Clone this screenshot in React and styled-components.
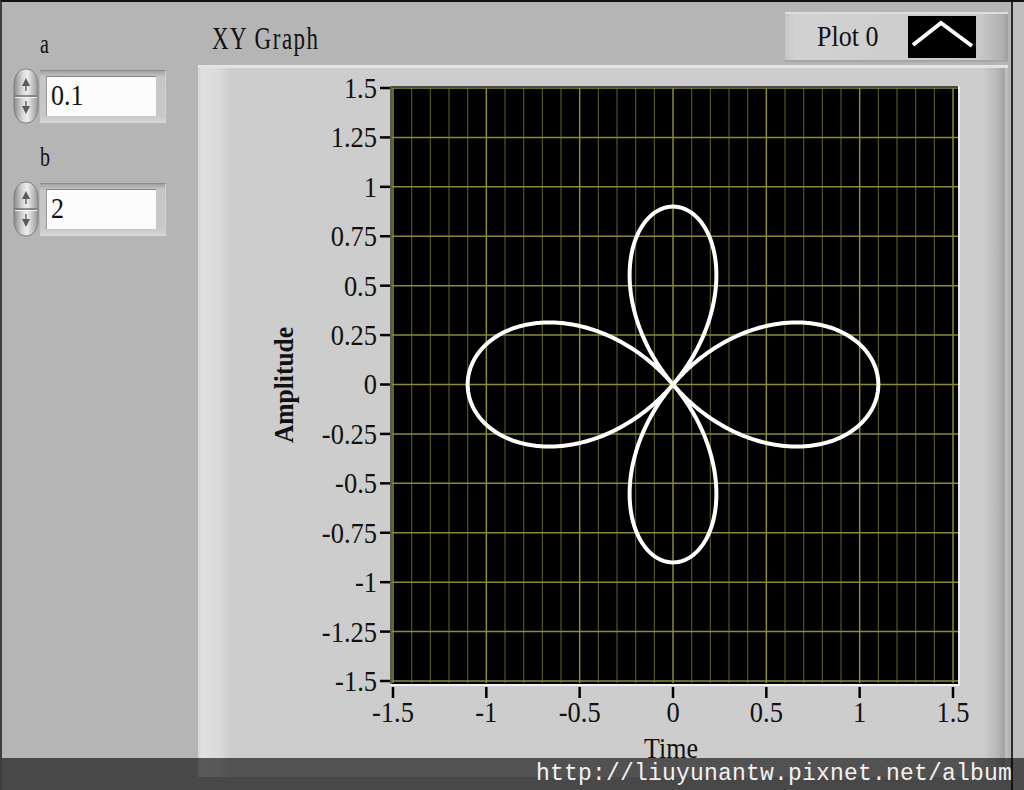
import React from "react"
import styled, { createGlobalStyle } from "styled-components"

const Global = createGlobalStyle`
  html, body {
    margin: 0;
    padding: 0;
    background: #b5b5b5;
    overflow: hidden;
  }
`

const SERIF = `"Liberation Serif", "Times New Roman", serif`

const Root = styled.div`
  position: relative;
  width: 1024px;
  height: 790px;
  box-sizing: border-box;
  overflow: hidden;
  display: flex;
  background: #b5b5b5;
  border-top: 2px solid #111;
  border-left: 2px solid #3e3e3e;
  font-family: ${SERIF};
  color: #111;
`

const LeftCol = styled.div`
  width: 196px;
  flex: none;
  box-sizing: border-box;
  padding: 34px 0 0 10px;
  display: flex;
  flex-direction: column;
`

const Group = styled.div`
  display: flex;
  flex-direction: column;
  margin-bottom: 25px;
`

const Label = styled.div`
  height: 20px;
  font-size: 20px;
  line-height: 20px;
  margin-left: 28px;
  margin-bottom: 12px;
  span {
    display: inline-block;
    transform: scaleY(1.4);
    transform-origin: left 17px;
  }
`

const Row = styled.div`
  display: flex;
  align-items: center;
`

const FieldFrame = styled.div`
  width: 126px;
  height: 53px;
  box-sizing: border-box;
  padding: 5px 9px 7px 6px;
  background: linear-gradient(#a3a3a3, #c6c6c6 6px, #c8c8c8 calc(100% - 7px), #d8d8d8);
  border-top: 1px solid #8c8c8c;
  border-right: 1px solid #d2d2d2;
`

const FieldInput = styled.div`
  height: 100%;
  box-sizing: border-box;
  background: #fcfcfc;
  border-top: 1px solid #858585;
  border-left: 1px solid #9a9a9a;
  display: flex;
  align-items: center;
  padding-left: 4px;
  font-size: 26px;
  span {
    display: inline-block;
    transform: scaleY(1.14);
  }
`

const GraphCol = styled.div`
  width: 813px;
  flex: none;
  display: flex;
  flex-direction: column;
`

const Header = styled.div`
  height: 63px;
  display: flex;
  align-items: flex-start;
  padding-left: 14px;
  box-sizing: border-box;
`

const Title = styled.div`
  margin-top: 28px;
  font-size: 23px;
  line-height: 23px;
  letter-spacing: 1.5px;
  span {
    display: inline-block;
    transform: scaleY(1.35);
    transform-origin: left 19px;
  }
`

const Legend = styled.div`
  margin: 10px 3px 0 auto;
  width: 223px;
  height: 50px;
  box-sizing: border-box;
  display: flex;
  align-items: center;
  padding-left: 32px;
  padding-right: 32px;
  background: linear-gradient(
    to right,
    #c6c6c6 0,
    #d2d2d2 12px,
    #cdcdcd 60%,
    #c9c9c9 calc(100% - 28px),
    #b0b0b0 calc(100% - 6px),
    #9e9e9e 100%
  );
  border-top: 2px solid #dedede;
  border-bottom: 2px solid #a6a6a6;
`

const LegendName = styled.div`
  font-size: 26px;
  span {
    display: inline-block;
    transform: scaleY(1.15);
  }
`

const Swatch = styled.svg`
  margin-left: auto;
  display: block;
  background: #000;
`

const Panel = styled.div`
  width: 810px;
  height: 712px;
  position: relative;
  background: linear-gradient(
    to right,
    #d4d4d4 0,
    #e0e0e0 4px,
    #dadada 22px,
    #cdcdcd 32px,
    #cdcdcd 785px,
    #b6b6b6 800px,
    #a2a2a2 806px,
    #c2c2c2 808px,
    #b8b8b8 810px
  );
  box-shadow: inset 0 3px 0 #e4e4e4;
`

const RightEdge = styled.div`
  flex: none;
  width: 11px;
  border-left: 2px solid #2c2c2c;
  background: #bdbdbd;
`

const Band = styled.div`
  position: absolute;
  left: 0;
  right: 0;
  top: 756px;
  height: 32px;
  background: rgba(0, 0, 0, 0.6);
  text-align: right;
  padding-right: 12px;
  box-sizing: border-box;
  font-family: "Liberation Mono", "Courier New", monospace;
  font-size: 23px;
  letter-spacing: 0.2px;
  line-height: 32px;
  color: #f2f2f2;
`

function Spinner() {
  return (
    <svg width="28" height="56" viewBox="0 0 28 56" style={{ display: "block", flex: "none" }}>
      <defs>
        <linearGradient id="spg" x1="0" x2="1" y1="0" y2="0">
          <stop offset="0" stopColor="#8a8a8a" />
          <stop offset="0.35" stopColor="#d6d6d6" />
          <stop offset="0.55" stopColor="#eeeeee" />
          <stop offset="1" stopColor="#979797" />
        </linearGradient>
      </defs>
      <rect x="2" y="1" width="24" height="54" rx="11" ry="15" fill="url(#spg)" stroke="#7c7c7c" />
      <line x1="3" x2="25" y1="28" y2="28" stroke="#6f6f6f" strokeWidth="1.5" />
      <line x1="3" x2="25" y1="29.5" y2="29.5" stroke="#f4f4f4" strokeWidth="1" />
      <path d="M10 18 L14 10 L18 18 Z" fill="#5a5a5a" />
      <rect x="13" y="18" width="2" height="5" fill="#8a8a8a" />
      <path d="M10 38 L14 46 L18 38 Z" fill="#5a5a5a" />
      <rect x="13" y="33" width="2" height="5" fill="#8a8a8a" />
    </svg>
  )
}

function Control({ name, value }) {
  return (
    <Group>
      <Label>
        <span>{name}</span>
      </Label>
      <Row>
        <Spinner />
        <FieldFrame>
          <FieldInput>
            <span>{value}</span>
          </FieldInput>
        </FieldFrame>
      </Row>
    </Group>
  )
}

// plot mapping, panel coordinates
const X = (v) => 475 + v * 186.67
const Y = (v) => 319.5 - v * 197.67
const yTicks = [1.5, 1.25, 1, 0.75, 0.5, 0.25, 0, -0.25, -0.5, -0.75, -1, -1.25, -1.5]
const xTicks = [-1.5, -1, -0.5, 0, 0.5, 1, 1.5]

function curvePath(a, b) {
  const n = 1200
  let d = ""
  for (let i = 0; i <= n; i++) {
    const t = (i / n) * Math.PI * 2
    const r = a + Math.cos(b * t)
    const px = X(r * Math.cos(t)).toFixed(2)
    const py = Y(r * Math.sin(t)).toFixed(2)
    d += (i === 0 ? "M" : "L") + px + " " + py
  }
  return d + "Z"
}

function Chart() {
  const vLines = []
  for (let i = 0; i <= 30; i++) {
    const v = -1.5 + i * 0.1
    const major = i % 5 === 0
    vLines.push(
      <line
        key={"v" + i}
        x1={X(v)}
        x2={X(v)}
        y1={22}
        y2={618}
        stroke={major ? "#8a8a2e" : "#55551e"}
        strokeWidth={major ? 1.5 : 1.2}
      />
    )
  }
  return (
    <svg width="810" height="712" style={{ display: "block" }} fontFamily={SERIF}>
      <rect x="193" y="22" width="567" height="597" fill="#000" />
      {vLines}
      {yTicks.map((v) => (
        <line key={"h" + v} x1={193} x2={760} y1={Y(v)} y2={Y(v)} stroke="#8a8a38" strokeWidth="1.5" />
      ))}
      <path d={curvePath(0.1, 2)} fill="none" stroke="#fff" strokeWidth="4" strokeLinejoin="round" />
      <line x1="192" x2="761" y1="22" y2="22" stroke="#4a4a4a" strokeWidth="2" />
      <line x1="193" x2="193" y1="21" y2="619" stroke="#5a5a5a" strokeWidth="2" />
      <line x1="761" x2="761" y1="21" y2="620" stroke="#ececec" strokeWidth="2" />
      <line x1="192" x2="762" y1="620" y2="620" stroke="#f2f2f2" strokeWidth="2" />
      {yTicks.map((v) => (
        <g key={"yt" + v}>
          <line x1="182" x2="192" y1={Y(v)} y2={Y(v)} stroke="#000" strokeWidth="2.5" />
          <text
            x="179"
            y="0"
            transform={`translate(0 ${Y(v)}) scale(1 1.1)`}
            textAnchor="end"
            dominantBaseline="central"
            fontSize="26.5"
            fill="#111"
          >
            {String(v)}
          </text>
        </g>
      ))}
      {xTicks.map((v) => (
        <g key={"xt" + v}>
          <line x1={X(v)} x2={X(v)} y1="622" y2="633" stroke="#000" strokeWidth="2.5" />
          <text
            x="0"
            y="0"
            transform={`translate(${X(v)} 647.5) scale(1 1.1)`}
            textAnchor="middle"
            dominantBaseline="central"
            fontSize="26.5"
            fill="#111"
          >
            {String(v)}
          </text>
        </g>
      ))}
      <text
        transform="translate(86 320) rotate(-90) scale(1 1.05)"
        textAnchor="middle"
        dominantBaseline="central"
        fontSize="25.5"
        fontWeight="bold"
        fill="#111"
      >
        Amplitude
      </text>
      <text
        transform="translate(473 684) scale(1 1.1)"
        textAnchor="middle"
        dominantBaseline="central"
        fontSize="26"
        fill="#111"
      >
        Time
      </text>
    </svg>
  )
}

export default function App() {
  return (
    <>
      <Global />
      <Root>
        <LeftCol>
          <Control name="a" value="0.1" />
          <Control name="b" value="2" />
        </LeftCol>
        <GraphCol>
          <Header>
            <Title>
              <span>XY Graph</span>
            </Title>
            <Legend>
              <LegendName>
                <span>Plot 0</span>
              </LegendName>
              <Swatch width="68" height="42" viewBox="0 0 68 42">
                <polyline points="5,29 33,7 64,30" fill="none" stroke="#fff" strokeWidth="4" />
              </Swatch>
            </Legend>
          </Header>
          <Panel>
            <Chart />
          </Panel>
        </GraphCol>
        <RightEdge />
        <Band>http://liuyunantw.pixnet.net/album</Band>
      </Root>
    </>
  )
}
